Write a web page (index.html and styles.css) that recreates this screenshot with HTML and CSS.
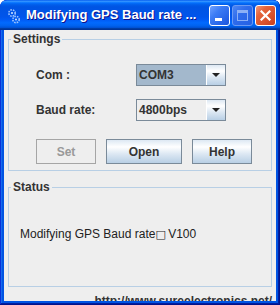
FILE: index.html
```html
<!DOCTYPE html>
<html>
<head>
    <title>Modifying GPS Baud rate</title>
    <link rel="stylesheet" href="styles.css">
</head>
<body>
    <div class="window">
        <div class="titlebar">
            <svg class="app-icon" width="14" height="16" viewBox="0 0 14 16">
                <circle cx="5" cy="5" r="3.2" fill="none" stroke="#9cc4ff" stroke-width="1.6" stroke-dasharray="1.6 1"/>
                <circle cx="5" cy="5" r="1" fill="#d8e8ff"/>
                <circle cx="9" cy="11.5" r="3.2" fill="none" stroke="#9cc4ff" stroke-width="1.6" stroke-dasharray="1.6 1"/>
                <circle cx="9" cy="11.5" r="1" fill="#d8e8ff"/>
            </svg>
            <span class="title">Modifying GPS Baud rate ...</span>
            <div class="controls">
                <div class="ctl ctl-min"><span class="min-bar"></span></div>
                <div class="ctl ctl-max"><span class="max-box"></span></div>
                <div class="ctl ctl-close">
                    <svg width="11" height="11" viewBox="0 0 11 11">
                        <path d="M1.5 1.5 L9.5 9.5 M9.5 1.5 L1.5 9.5" stroke="#fff" stroke-width="2.2" stroke-linecap="square"/>
                    </svg>
                </div>
            </div>
        </div>

        <div class="client">
            <fieldset class="group settings">
                <legend>Settings</legend>
                <div class="form-grid">
                    <label>Com :</label>
                    <div class="combo focused">
                        <span class="value">COM3</span>
                        <span class="arrow"><i></i></span>
                    </div>
                    <label>Baud rate:</label>
                    <div class="combo">
                        <span class="value">4800bps</span>
                        <span class="arrow"><i></i></span>
                    </div>
                </div>
                <div class="actions">
                    <button class="btn" disabled>Set</button>
                    <button class="btn btn-wide">Open</button>
                    <button class="btn">Help</button>
                </div>
            </fieldset>

            <fieldset class="group status">
                <legend>Status</legend>
                <p class="status-text">Modifying GPS Baud rate<span class="nochar">□</span> V100</p>
            </fieldset>

            <div class="footer-link">http://www.sureelectronics.net/</div>
        </div>
    </div>
</body>
</html>
```

FILE: styles.css
```css
body {
    margin: 0;
    background-color: #fff;
    font-family: "Liberation Sans", Arial, sans-serif;
}
.window {
    width: 280px;
    height: 305px;
    box-sizing: border-box;
    background-color: #0054e3;
    border-radius: 7px 7px 0 0;
    box-shadow: inset -1px -1px #00138c, inset 1px 1px #0831d9, inset -2px -2px #001ea0, inset 2px 2px #166aee;
    display: flex;
    flex-direction: column;
    overflow: hidden;
}
.titlebar {
    height: 30px;
    flex: none;
    display: flex;
    align-items: center;
    padding: 0 4px 0 7px;
    border-radius: 7px 7px 0 0;
    background: linear-gradient(180deg, #0058ee 0%, #3593ff 4%, #288eff 6%, #127dff 8%, #036ffc 10%, #0262ee 14%, #0057e5 20%, #0054e3 24%, #0055eb 56%, #005bf5 66%, #026afe 76%, #0062ef 86%, #0052d6 92%, #0040ab 94%, #003092 100%);
}
.app-icon {
    flex: none;
    margin-right: 5px;
    margin-top: 1px;
}
.title {
    color: #fff;
    font-weight: bold;
    font-size: 13px;
    line-height: 16px;
    text-shadow: 1px 1px #0f1089;
    white-space: nowrap;
}
.controls {
    margin-left: auto;
    display: flex;
    gap: 2px;
    margin-top: 1px;
}
.ctl {
    width: 21px;
    height: 21px;
    box-sizing: border-box;
    border: 1px solid #fff;
    border-radius: 3px;
    position: relative;
    display: flex;
    align-items: center;
    justify-content: center;
}
.ctl-min {
    background: linear-gradient(135deg, #6fa1ff 0%, #3c7cf5 35%, #2460e6 80%, #1d55d8 100%);
}
.min-bar {
    position: absolute;
    left: 5px;
    bottom: 4px;
    width: 7px;
    height: 3px;
    background-color: #fff;
}
.ctl-max {
    border-color: #6b9af3;
    background: linear-gradient(135deg, #4d86f3 0%, #2f6cec 40%, #2560e3 100%);
}
.max-box {
    width: 9px;
    height: 7px;
    border: 1px solid #8cb0f6;
    border-top-width: 3px;
}
.ctl-close {
    background: linear-gradient(135deg, #f29a7b 0%, #e4643c 30%, #d9502a 70%, #c5401e 100%);
}
.client {
    margin: 0 4px 4px 4px;
    height: 271px;
    background-color: #eeeeee;
    overflow: hidden;
    color: #333;
}
.group {
    margin: 2px 4px 0 4px;
    padding: 0 2px;
    border: 1px solid #b8cfe5;
    min-width: 0;
}
.group legend {
    padding: 0 2px;
    font-weight: bold;
    font-size: 12px;
    line-height: 14px;
    color: #333;
}
.form-grid {
    display: grid;
    grid-template-columns: 100px 90px;
    grid-auto-rows: 22px;
    row-gap: 13px;
    align-items: center;
    padding-left: 25px;
    margin-top: 18px;
}
label {
    font-weight: bold;
    font-size: 12px;
}
.combo {
    height: 22px;
    box-sizing: border-box;
    border: 1px solid #7a8a99;
    display: flex;
    background-color: #eeeeee;
}
.combo .value {
    flex: 1;
    padding-left: 2px;
    font-weight: bold;
    font-size: 12px;
    line-height: 20px;
}
.combo.focused .value {
    background-color: #a3b8cc;
}
.combo .arrow {
    width: 18px;
    border-left: 1px solid #ffffff;
    display: flex;
    align-items: center;
    justify-content: center;
    background: linear-gradient(180deg, #dde8f3 0%, #ffffff 30%, #dde8f3 60%, #b8cfe5 100%);
}
.combo .arrow i {
    width: 0;
    height: 0;
    border-left: 4px solid transparent;
    border-right: 4px solid transparent;
    border-top: 4px solid #222;
}
.actions {
    display: flex;
    gap: 10px;
    padding-left: 25px;
    margin-top: 18px;
    margin-bottom: 6px;
}
.btn {
    width: 60px;
    height: 25px;
    padding: 0;
    border: 1px solid #7a8a99;
    border-radius: 0;
    font-family: "Liberation Sans", Arial, sans-serif;
    font-weight: bold;
    font-size: 12px;
    color: #333;
    background: linear-gradient(180deg, #dde8f3 0%, #ffffff 30%, #dde8f3 60%, #b8cfe5 100%);
}
.btn-wide {
    width: 76px;
}
.btn:disabled {
    background: #eeeeee;
    border-color: #a5a5a5;
    color: #999;
}
.status {
    margin-top: 9px;
}
.status-text {
    margin: 33px 0 44px 0;
    padding-left: 9px;
    font-size: 12px;
    line-height: 14px;
    color: #222;
}
.nochar {
    font-family: "DejaVu Sans", sans-serif;
    font-size: 11px;
    letter-spacing: -1px;
}
.footer-link {
    margin-top: 7px;
    padding-right: 4px;
    text-align: right;
    font-weight: bold;
    font-size: 12px;
    line-height: 14px;
}
```
